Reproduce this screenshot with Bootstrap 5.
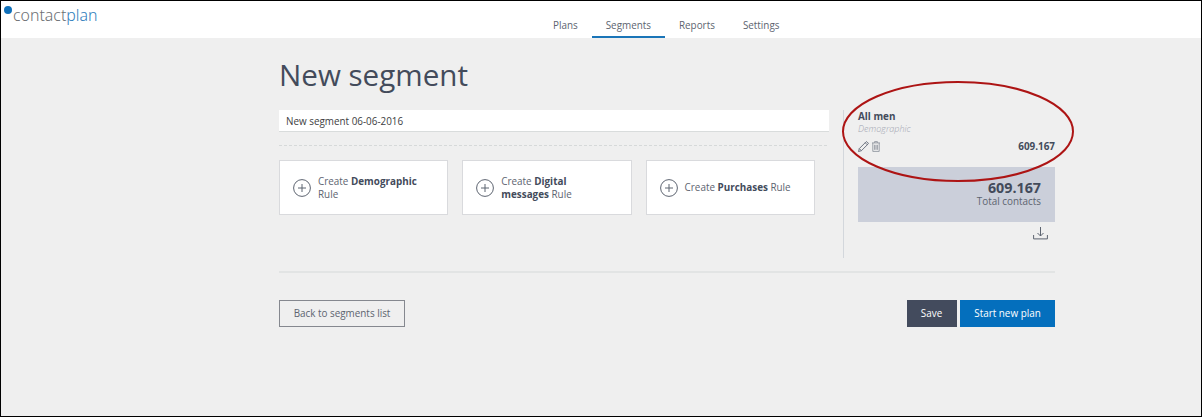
<!DOCTYPE html>
<html lang="en">
<head>
<meta charset="utf-8">
<meta name="viewport" content="width=device-width, initial-scale=1">
<title>contactplan - New segment</title>
<link rel="stylesheet" href="https://cdn.jsdelivr.net/npm/bootstrap@5.3.0/dist/css/bootstrap.min.css">
<style>
  body { font-family: "Open Sans", sans-serif; font-size: 9.9px; line-height: 13px; color: #5d6470; background: #efefef; }
  .app-frame { height: 417px; border: 1px solid #000; overflow: hidden; }
  .topbar { height: 37px; padding-left: 3px; }
  .brand { width: 535px; font-family: "Noto Sans", "Open Sans", sans-serif; font-weight: 300; font-size: 15.9px; line-height: 18px; color: #6c6f73; padding-top: 5px; }
  .brand span { color: #2f7ebc; }
  .brand svg { width: 8px; height: 8px; margin-right: 1px; }
  .main-nav .nav-link { height: 23px; padding: 4px 14px 0; color: #5d6470; line-height: 13px; }
  .main-nav .nav-link.active { border-bottom: 2px solid #1a75b8; }
  .page { width: 776px; margin-left: 278px; }
  h1 { font-size: 29.6px; font-weight: 400; line-height: 40px; color: #434b5b; margin: 17px 0 15px; }
  .builder { width: 550px; }
  .name-field { height: 21px; min-height: 0; padding: 0 7px; font-size: 9.9px; color: #3d4042; background: #fff; border: 0; box-shadow: 0 1px 0 #d9dcdc; }
  .dashes { height: 1px; margin: 14px 0; background: repeating-linear-gradient(90deg, #d6d9d9 0 3px, transparent 3px 5px); }
  .rules { gap: 14px; }
  .rule-card { width: 169.3px; height: 55px; padding: 0 12px 0 13px; gap: 7px; background: #fff; border: 1px solid #d9dadd; }
  .rule-card b, .strong { color: #434b5b; font-weight: 700; }
  .summary { width: 212px; height: 148px; padding-left: 14px; border-left: 1px solid #d3d7dc; }
  .seg-type { font-size: 9px; line-height: 11px; font-style: italic; font-weight: 300; color: #9fa5b1; }
  .seg-row { height: 14px; margin-top: 5px; }
  .total { height: 55px; margin-top: 14px; padding: 14px 14px 0 0; background: #cbcfda; }
  .total .amount { font-size: 14.3px; line-height: 14px; }
  .download { padding: 5px 7px 0 0; }
  .divider { height: 2px; background: #e2e4e4; margin: 13px 0 27px; }
  .btn { --bs-btn-font-size: 9.9px; --bs-btn-line-height: 13px; --bs-btn-padding-y: 6px; --bs-btn-padding-x: 0; --bs-btn-border-radius: 0; height: 27px; }
  .btn-back { width: 126px; border-color: #85888f; color: #5d6470; }
  .btn-save { width: 50px; background: #434b5d; color: #fff; margin-right: 3.5px; }
  .btn-start { width: 95px; background: #046fbd; color: #fff; }
  .marker { left: 841px; top: 80px; width: 233px; height: 102px; pointer-events: none; }
  svg { flex: none; display: block; }
</style>
</head>
<body>
<div class="app-frame position-relative">
  <header class="topbar bg-white d-flex">
    <div class="brand d-flex">
      <svg viewBox="0 0 8 8"><circle cx="4" cy="4" r="4" fill="#0e6fb9"/></svg>
      <div>contact<span>plan</span></div>
    </div>
    <nav class="main-nav nav align-items-end flex-nowrap">
      <a class="nav-link" href="#">Plans</a>
      <a class="nav-link active" href="#">Segments</a>
      <a class="nav-link" href="#">Reports</a>
      <a class="nav-link" href="#">Settings</a>
    </nav>
  </header>

  <main class="page">
    <h1>New segment</h1>
    <div class="d-flex justify-content-between">
      <section class="builder">
        <input class="name-field form-control rounded-0" value="New segment 06-06-2016" aria-label="Segment name">
        <div class="dashes"></div>
        <div class="rules d-flex">
          <div class="rule-card d-flex align-items-center">
            <svg width="18" height="18" viewBox="0 0 18 18" fill="none" stroke="#5d6470"><circle cx="9" cy="9" r="8.4"/><path d="M9 5v8M5 9h8"/></svg>
            <div>Create <b>Demographic</b> Rule</div>
          </div>
          <div class="rule-card d-flex align-items-center">
            <svg width="18" height="18" viewBox="0 0 18 18" fill="none" stroke="#5d6470"><circle cx="9" cy="9" r="8.4"/><path d="M9 5v8M5 9h8"/></svg>
            <div>Create <b>Digital<br>messages</b> Rule</div>
          </div>
          <div class="rule-card d-flex align-items-center">
            <svg width="18" height="18" viewBox="0 0 18 18" fill="none" stroke="#5d6470"><circle cx="9" cy="9" r="8.4"/><path d="M9 5v8M5 9h8"/></svg>
            <div>Create <b>Purchases</b> Rule</div>
          </div>
        </div>
      </section>

      <aside class="summary">
        <div class="strong">All men</div>
        <div class="seg-type">Demographic</div>
        <div class="seg-row d-flex align-items-center">
          <svg width="11" height="11" viewBox="0 0 11 11" fill="none" stroke="#626977" stroke-width=".9"><path d="M.5 10.5l.8-2.9L8 .9q.5-.5 1 0l1.1 1.1q.5.5 0 1L3.4 9.7zM1.3 7.6l2.1 2.1M7.2 1.7l2.1 2.1"/></svg>
          <svg width="8" height="11" viewBox="0 0 8 11" fill="none" stroke="#858b96" stroke-width=".8" style="margin-left:3px"><path d="M0 1.9h8M2.6 1.8V.6h2.8v1.2M.8 2v8.4h6.4V2M2.6 3.8v5M4 3.8v5M5.4 3.8v5"/></svg>
          <span class="strong ms-auto">609.167</span>
        </div>
        <div class="total text-end">
          <div class="amount strong">609.167</div>
          <div>Total contacts</div>
        </div>
        <div class="download d-flex justify-content-end">
          <svg width="15" height="13" viewBox="0 0 15 13" fill="none" stroke="#5d6470"><path d="M.6 8v3.9h13.8V8M7.5 0v9M4.5 6l3 3 3-3"/></svg>
        </div>
      </aside>
    </div>

    <div class="divider"></div>
    <div class="d-flex">
      <button class="btn btn-back">Back to segments list</button>
      <button class="btn btn-save border-0 ms-auto">Save</button>
      <button class="btn btn-start border-0">Start new plan</button>
    </div>
  </main>

  <svg class="marker position-absolute" viewBox="0 0 233 102" fill="none" stroke="#ad1414" stroke-width="2"><ellipse cx="116" cy="50.5" rx="115" ry="49.5"/></svg>
</div>
<script src="https://cdn.jsdelivr.net/npm/bootstrap@5.3.0/dist/js/bootstrap.bundle.min.js"></script>
</body>
</html>
